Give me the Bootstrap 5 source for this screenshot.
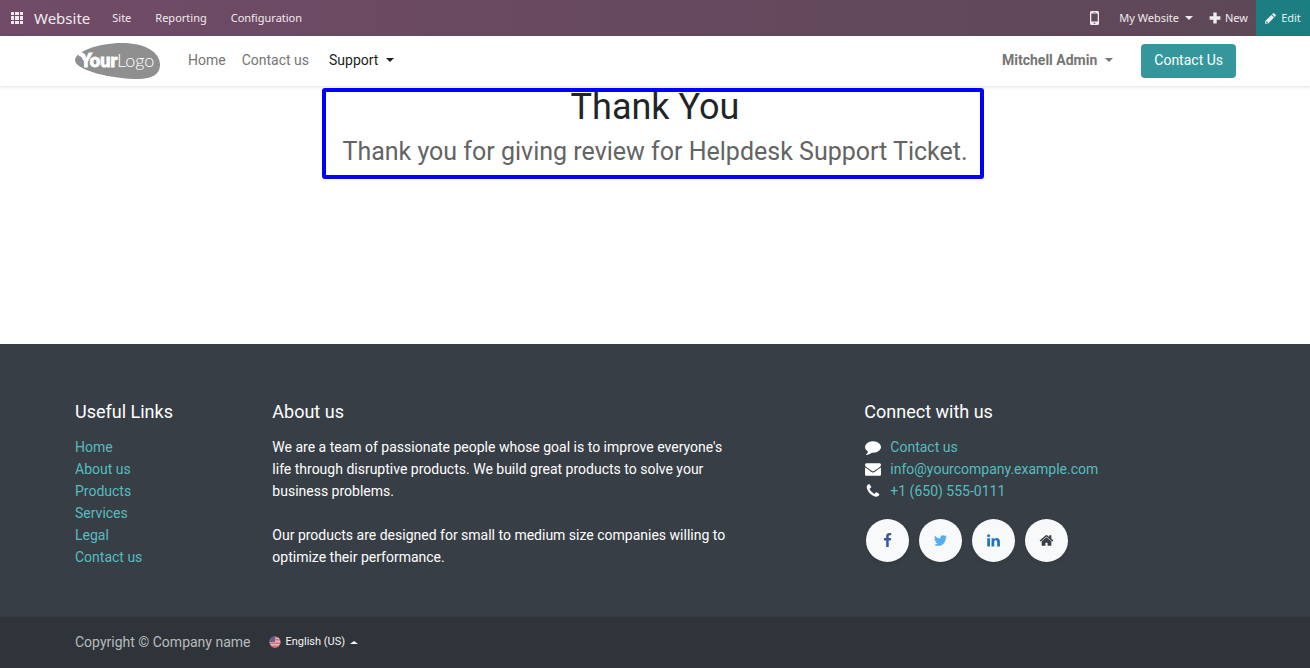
<!DOCTYPE html>
<html lang="en">
<head>
<meta charset="utf-8">
<meta name="viewport" content="width=device-width, initial-scale=1">
<title>Thank You | My Website</title>
<link href="https://cdn.jsdelivr.net/npm/bootstrap@5.3.0/dist/css/bootstrap.min.css" rel="stylesheet">
<style>
  body { font-family: Roboto, "Liberation Sans", sans-serif; font-size: 14px; line-height: 22px; background: #fff; color: #212529; }
  a { text-decoration: none; }
  .site-container { max-width: 1188px; --bs-gutter-x: 28px; }
  .site-header .site-container { --bs-gutter-x: 26px; }
  .ico { width: 14px; height: 14px; fill: currentColor; flex: none; }

  .app-bar { height: 36px; padding-left: 11px; background: linear-gradient(90deg, #714b67, #5c4857); font-family: "Noto Sans", "Open Sans", sans-serif; font-size: 11px; }
  .app-bar a, .app-bar button { color: #f0ebee; }
  .app-bar .app-name { font-size: 15px; margin-left: 11px; margin-right: 22px; }
  .app-bar .app-links { gap: 24px; }
  .bar-btn { border: 0; background: none; padding: 0; font-size: 11px; display: flex; align-items: center; }
  .bar-btn.dropdown-toggle::after { margin-left: 6px; border-top-width: 4px; border-left-width: 4px; border-right-width: 4px; vertical-align: 0; }
  .edit-btn { background: #1d7e82; width: 54px; height: 36px; justify-content: center; gap: 5px; }

  .site-header { min-height: 50px; box-shadow: 0 1px 3px rgba(0, 0, 0, .12); }
  .site-header .nav-link { padding: 0 8px 2px; font-size: 14px; color: #757575; }
  .site-header .nav-link.active { color: #1c1e20; }
  .site-header .dropdown-toggle::after { margin-left: 8px; border-top-width: 4px; border-left-width: 4px; border-right-width: 4px; vertical-align: 3px; }
  .brand { width: 86px; height: 38px; margin-right: 20px; }
  .brand svg { display: block; }
  .cta { background: #35979c; color: #fff; border: 0; font-size: 14px; line-height: 22px; padding: 5px 13px 7px; border-radius: 4px; margin-left: 20px; }
  .cta:hover { background: #2b7c80; color: #fff; }

  main { min-height: 258px; }
  .thanks { position: relative; width: fit-content; }
  .thanks::after { content: ""; position: absolute; inset: 2px -16px -11px -20px; border: 4px solid #00f; border-radius: 3px; pointer-events: none; }
  .thanks h1 { font-size: 36px; line-height: 42px; font-weight: 400; margin-bottom: 7px; }
  .thanks p { font-size: 25px; line-height: 33px; color: #636464; }

  .foot-main { background: #383e45; color: #fff; padding: 57px 0 48px; }
  .foot-main h2 { font-size: 18px; line-height: 22px; font-weight: 400; margin-bottom: 13px; }
  .foot-main a { color: #54bdc0; }
  .contact-line { gap: 9px; }
  .contact-line .ico { width: 16px; height: 16px; margin-left: 1px; }
  .socials { gap: 10px; margin: 17px 0 0 2px; }
  .foot-main .social { width: 43px; height: 43px; border-radius: 50%; background: #f8f9fa; box-shadow: 0 2px 4px rgba(0, 0, 0, .08); }
  .social .ico { width: 15px; height: 15px; }
  .foot-main .fb { color: #3b5998; }
  .foot-main .tw { color: #55acee; }
  .foot-main .in { color: #2077b8; }
  .foot-main .hm { color: #383e45; }
  .foot-copy { background: #2f343a; color: #b9bbbd; border-top: 1px solid #34393f; padding: 14px 0; }
  .lang-btn { border: 0; background: none; color: #f5f5f5; font-size: 11px; line-height: 22px; padding: 0; margin-left: 19px; }
  .lang-btn svg { margin-right: 4px; }
  .lang-btn.dropdown-toggle::after { border-top: 0; border-bottom: 3px solid; border-left: 4px solid transparent; border-right: 4px solid transparent; margin-left: 5px; }
</style>
</head>
<body class="d-flex flex-column min-vh-100">

<nav class="app-bar d-flex align-items-center" aria-label="Application">
  <a href="#" class="d-flex" aria-label="Apps">
    <svg width="12" height="12" viewBox="0 0 12 12" fill="currentColor" shape-rendering="crispEdges"><path d="M0 0h3v3H0zM4 0h4v3H4zM9 0h3v3H9zM0 4h3v4H0zM4 4h4v4H4zM9 4h3v4H9zM0 9h3v3H0zM4 9h4v3H4zM9 9h3v3H9z"/></svg>
  </a>
  <a href="#" class="app-name">Website</a>
  <div class="app-links d-flex">
    <a href="#">Site</a>
    <a href="#">Reporting</a>
    <a href="#">Configuration</a>
  </div>
  <div class="d-flex align-items-center ms-auto">
    <button type="button" class="bar-btn me-1" aria-label="Mobile preview">
      <svg width="9" height="14" viewBox="0 0 9 14"><path fill="currentColor" fill-rule="evenodd" d="M1.500 0h6A1.500 1.500 0 0 1 9 1.500v11A1.500 1.500 0 0 1 7.500 14h-6A1.500 1.500 0 0 1 0 12.500v-11A1.500 1.500 0 0 1 1.500 0zM1.300 2.500v8h6.400v-8zM3.200 1v.6h2.600V1zM4.500 11.400a.8.8 0 1 0 0 1.600.8.8 0 0 0 0-1.600z"/></svg>
    </button>
    <button type="button" class="bar-btn dropdown-toggle ms-3">My Website</button>
    <button type="button" class="bar-btn ms-3 me-2 gap-1">
      <svg width="12" height="12" viewBox="0 0 10 10"><path fill="currentColor" d="M3.600.5h2.800v3.100h3.100v2.800H6.400v3.100H3.600V6.400H.5V3.600h3.100z"/></svg>
      New
    </button>
    <button type="button" class="bar-btn edit-btn">
      <svg width="11" height="11" viewBox="0 0 11 11"><path fill="currentColor" fill-rule="evenodd" d="M7.900.4a.9.900 0 0 1 1.300 0l1.400 1.400a.9.900 0 0 1 0 1.300l-.9.900L7 1.300zM6.400 1.900l2.700 2.700-6.200 6.200H.2V8.100zM1.100 8.700v1h.7v.7h.6l.6-.7-1.300-1.400z"/></svg>
      Edit
    </button>
  </div>
</nav>

<header class="site-header d-flex align-items-center">
  <div class="container-fluid site-container d-flex align-items-center">
    <a href="#" class="brand" aria-label="Your Logo">
      <svg width="86" height="38" viewBox="0 0 86 38">
        <path fill="#8f8f8f" d="M1 18C1 10 24 1 48 1c23 0 38 9 38 22 0 9-8 14-22 14C40 37 1 29 1 18z"/>
        <path fill="#fff" d="M4 11h5l-1 4-3-1zM7 13l4-1 1 3z"/>
        <text y="25" fill="#fff" font-family="Lato, sans-serif" font-size="18"><tspan x="6" font-weight="900" stroke="#fff" stroke-width="1">Your</tspan><tspan x="43" font-weight="300">Logo</tspan></text>
      </svg>
    </a>
    <nav class="nav" aria-label="Main">
      <a class="nav-link" href="#">Home</a>
      <a class="nav-link" href="#">Contact us</a>
      <a class="nav-link active dropdown-toggle ms-1" href="#">Support</a>
    </nav>
    <a class="nav-link dropdown-toggle fw-bold ms-auto" href="#">Mitchell Admin</a>
    <a class="btn cta" href="#">Contact Us</a>
  </div>
</header>

<main>
  <div class="thanks mx-auto text-center">
    <h1>Thank You</h1>
    <p class="mb-0">Thank you for giving review for Helpdesk Support Ticket.</p>
  </div>
</main>

<footer class="flex-grow-1 d-flex flex-column">
  <section class="foot-main">
    <div class="container-fluid site-container">
      <div class="row">
        <div class="col-lg-2">
          <h2>Useful Links</h2>
          <ul class="list-unstyled mb-0">
            <li><a href="#">Home</a></li>
            <li><a href="#">About us</a></li>
            <li><a href="#">Products</a></li>
            <li><a href="#">Services</a></li>
            <li><a href="#">Legal</a></li>
            <li><a href="#">Contact us</a></li>
          </ul>
        </div>
        <div class="col-lg-5">
          <h2>About us</h2>
          <p class="mb-0">We are a team of passionate people whose goal is to improve everyone's<br>life through disruptive products. We build great products to solve your<br>business problems.<br><br>Our products are designed for small to medium size companies willing to<br>optimize their performance.</p>
        </div>
        <div class="col-lg-4 offset-lg-1">
          <h2>Connect with us</h2>
          <ul class="list-unstyled mb-0">
            <li class="contact-line d-flex align-items-center">
              <svg class="ico" viewBox="0 0 1792 1792"><path d="M1792 896q0 174-120 321.500t-326 233-450 85.500q-70 0-145-8-198 175-460 242-49 14-114 22-17 2-30.500-9t-17.500-29v-1q-3-4-.5-12t2-10 4.500-9.500l6-9 7-8.500 8-9q7-8 31-34.500t34.500-38 31-39.500 32.500-51 27-59 26-76q-157-89-247.500-220t-90.500-281q0-174 120-321.500t326-233 450-85.500 450 85.500 326 233 120 321.500z"/></svg>
              <a href="#">Contact us</a>
            </li>
            <li class="contact-line d-flex align-items-center">
              <svg class="ico" viewBox="0 0 1792 1792"><path d="M1792 710v794q0 66-47 113t-113 47h-1472q-66 0-113-47t-47-113v-794q44 49 101 87 362 246 497 345 57 42 92.500 65.500t94.500 48 110 24.500h2q51 0 110-24.500t94.500-48 92.500-65.500q170-123 498-345 57-39 100-87zm0-294q0 79-49 151t-122 123q-376 261-468 325-10 7-42.500 30.500t-54 38-52 32.500-57.500 27-50 9h-2q-23 0-50-9t-57.500-27-52-32.500-54-38-42.500-30.500q-91-64-262-182.500t-205-142.500q-62-42-117-115.500t-55-136.500q0-78 41.500-130t118.500-52h1472q65 0 112.500 47t47.500 113z"/></svg>
              <a href="#">info@yourcompany.example.com</a>
            </li>
            <li class="contact-line d-flex align-items-center">
              <svg class="ico" viewBox="0 0 1792 1792"><path d="M1600 1240q0 27-10 70.500t-21 68.500q-21 50-122 106-94 51-186 51-27 0-53-3.500t-57.500-12.500-47-14.500-55.500-20.500-49-18q-98-35-175-83-127-79-264-216t-216-264q-48-77-83-175-3-9-18-49t-20.500-55.500-14.500-47-12.500-57.500-3.500-53q0-92 51-186 56-101 106-122 25-11 68.500-21t70.500-10q14 0 21 3 18 6 53 76 11 19 30 54t35 63.500 31 53.500q3 4 17.500 25t21.500 35.500 7 28.500q0 20-28.500 50t-62 55-62 53-28.500 46q0 9 5 22.500t8.500 20.500 14 24 11.500 19q76 137 174 235t235 174q2 1 19 11.500t24 14 20.500 8.500 22.500 5q18 0 46-28.500t53-62 55-62 50-28.500q14 0 28.500 7t35.500 21.500 25 17.500q25 15 53.500 31t63.500 35 54 30q70 35 76 53 3 7 3 21z"/></svg>
              <a href="#">+1 (650) 555-0111</a>
            </li>
          </ul>
          <div class="socials d-flex">
            <a href="#" class="social fb d-flex align-items-center justify-content-center" aria-label="Facebook"><svg class="ico" viewBox="0 0 1792 1792"><path d="M1343 12v264h-157q-86 0-116 36t-30 108v189h293l-39 296h-254v759h-306v-759h-255v-296h255v-218q0-186 104-288.500t277-102.500q147 0 228 12z"/></svg></a>
            <a href="#" class="social tw d-flex align-items-center justify-content-center" aria-label="Twitter"><svg class="ico" viewBox="0 0 1792 1792"><path d="M1684 408q-67 98-162 167 1 14 1 42 0 130-38 259.500t-115.500 248.500-184.500 210.500-258 146-323 54.500q-271 0-496-145 35 4 78 4 225 0 401-138-105-2-188-64.500t-114-159.500q33 5 61 5 43 0 85-11-112-23-185.500-111.500t-73.500-205.500v-4q68 38 146 41-66-44-105-115t-39-154q0-88 44-163 121 149 294.500 238.500t371.500 99.500q-8-38-8-74 0-134 94.500-228.500t228.500-94.500q140 0 236 102 109-21 205-78-37 115-142 178 93-10 186-50z"/></svg></a>
            <a href="#" class="social in d-flex align-items-center justify-content-center" aria-label="LinkedIn"><svg class="ico" viewBox="0 0 1792 1792"><path d="M477 625v991h-330v-991h330zm21-306q1 73-50.500 122t-135.500 49h-2q-82 0-132-49t-50-122q0-74 51.500-122.500t134.500-48.500 133 48.500 51 122.500zm1166 729v568h-329v-530q0-105-40.500-164.500t-126.500-59.500q-63 0-105.500 34.500t-63.500 85.500q-11 30-11 81v553h-329q2-399 2-647t-1-296l-1-48h329v144h-2q20-32 41-56t56.500-52 87-43.500 114.500-15.500q171 0 275 113.500t104 332.500z"/></svg></a>
            <a href="#" class="social hm d-flex align-items-center justify-content-center" aria-label="Home page"><svg class="ico" viewBox="0 0 1792 1792"><path d="M1472 992v480q0 26-19 45t-45 19h-384v-384h-256v384h-384q-26 0-45-19t-19-45v-480q0-1 .5-3t.5-3l575-474 575 474q1 2 1 6zm223-69l-62 74q-8 9-21 11h-3q-13 0-21-7l-692-577-692 577q-12 8-24 7-13-2-21-11l-62-74q-8-10-7-23.500t11-21.500l719-599q32-26 76-26t76 26l244 204v-195q0-14 9-23t23-9h192q14 0 23 9t9 23v408l219 182q10 8 11 21.500t-7 23.500z"/></svg></a>
          </div>
        </div>
      </div>
    </div>
  </section>
  <section class="foot-copy flex-grow-1">
    <div class="container-fluid site-container d-flex align-items-center">
      <span>Copyright © Company name</span>
      <button type="button" class="lang-btn dropdown-toggle d-flex align-items-center">
        <svg width="12" height="12" viewBox="0 0 12 12"><defs><clipPath id="disc"><circle cx="6" cy="6" r="5.500"/></clipPath></defs><g clip-path="url(#disc)"><path fill="#e3b5bb" d="M0 0h12v12H0z"/><path fill="#cf6f7b" d="M0 0h12v2H0zM0 3h12v1.500H0zM0 6.500h12v1.500H0zM0 9.500h12v2.500H0z"/><path fill="#5d5f8e" d="M0 0h6v6H0z"/></g></svg>
        English (US)
      </button>
    </div>
  </section>
</footer>

<script src="https://cdn.jsdelivr.net/npm/bootstrap@5.3.0/dist/js/bootstrap.bundle.min.js"></script>
</body>
</html>
